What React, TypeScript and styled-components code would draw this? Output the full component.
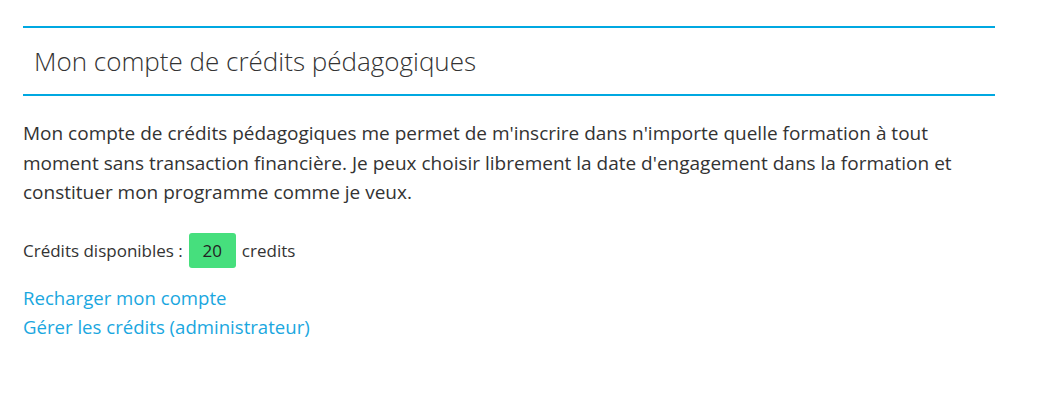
import React from "react";
import styled, { createGlobalStyle } from "styled-components";

const Global = createGlobalStyle`
  html, body { margin: 0; padding: 0; background: #fff; }
  body { font-family: "Open Sans", "Noto Sans", sans-serif; color: #333; }
`;

const Page = styled.div`
  padding: 26px 0 0 23px;
  width: 972px;
`;

const Header = styled.div`
  border-top: 2px solid #00a8e1;
  border-bottom: 2px solid #00a8e1;
  height: 66px;
  display: flex;
  align-items: center;
  padding-left: 11px;
`;

const Title = styled.h1`
  margin: 0;
  font-size: 26px;
  font-weight: 300;
  color: #333;
`;

const Text = styled.p`
  margin: 23px 0 0;
  font-size: 19px;
  line-height: 29.5px;
  color: #333;
`;

const CreditsRow = styled.div`
  margin-top: 25px;
  display: flex;
  align-items: center;
  gap: 6px;
  font-size: 17px;
`;

const Badge = styled.span`
  display: inline-flex;
  align-items: center;
  justify-content: center;
  width: 47px;
  height: 35px;
  background: #46df7d;
  border-radius: 3px;
  font-size: 17px;
  color: #222;
`;

const Links = styled.div`
  margin-top: 15px;
  display: flex;
  flex-direction: column;
`;

const Link = styled.a`
  color: #1aa7e0;
  font-size: 18.6px;
  line-height: 29px;
  text-decoration: none;
`;

export default function App() {
  return (
    <>
      <Global />
      <Page>
        <Header>
          <Title>Mon compte de crédits pédagogiques</Title>
        </Header>
        <Text>
          Mon compte de crédits pédagogiques me permet de m'inscrire dans n'importe quelle formation à tout
          moment sans transaction financière. Je peux choisir librement la date d'engagement dans la formation et
          constituer mon programme comme je veux.
        </Text>
        <CreditsRow>
          <span>Crédits disponibles :</span>
          <Badge>20</Badge>
          <span>credits</span>
        </CreditsRow>
        <Links>
          <Link href="#">Recharger mon compte</Link>
          <Link href="#">Gérer les crédits (administrateur)</Link>
        </Links>
      </Page>
    </>
  );
}
